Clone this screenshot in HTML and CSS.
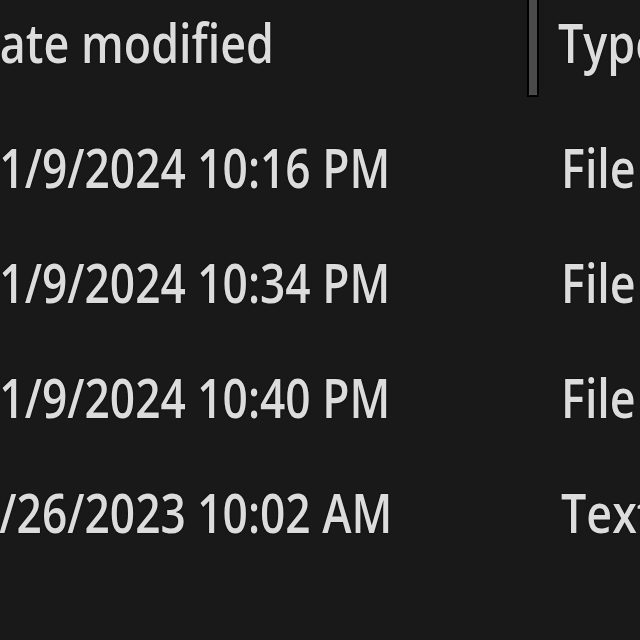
FILE: index.html
```html
<!DOCTYPE html>
<html>
<head>
<meta charset="utf-8">
<link rel="stylesheet" href="styles.css">
</head>
<body>
<div class="view">
  <div class="header">
    <div class="col-date"><span class="head-text">Date modified</span></div>
    <div class="sep"></div>
    <div class="col-type"><span class="head-text">Type</span></div>
  </div>
  <div class="rows">
    <div class="row">
      <div class="col-date"><span class="cell">11/9/2024 10:16 PM</span></div>
      <div class="col-type"><span class="cell">File folder</span></div>
    </div>
    <div class="row">
      <div class="col-date"><span class="cell">11/9/2024 10:34 PM</span></div>
      <div class="col-type"><span class="cell">File folder</span></div>
    </div>
    <div class="row">
      <div class="col-date"><span class="cell">11/9/2024 10:40 PM</span></div>
      <div class="col-type"><span class="cell">File folder</span></div>
    </div>
    <div class="row">
      <div class="col-date"><span class="cell">1/26/2023 10:02 AM</span></div>
      <div class="col-type"><span class="cell">Text Document</span></div>
    </div>
  </div>
</div>
</body>
</html>
```
FILE: styles.css
```css
html, body {
  margin: 0;
  padding: 0;
  background: #191919;
}
.view {
  width: 640px;
  height: 640px;
  overflow: hidden;
  font-family: "Open Sans", "Noto Sans", sans-serif;
  font-size: 54px;
  font-weight: 600;
  color: #dcdcdc;
  text-shadow: 0 0 2px #000;
}
.header {
  display: flex;
  height: 96px;
  align-items: flex-start;
}
.header .col-date {
  width: 562px;
  margin-left: -33px;
  flex: none;
  white-space: nowrap;
  padding-top: 5px;
}
.sep {
  width: 8px;
  height: 95px;
  flex: none;
  background: #4a4a4a;
  box-shadow: 0 0 0 2px #000;
}
.header .col-type {
  padding-left: 21px;
  padding-top: 5px;
  white-space: nowrap;
}
.rows {
  display: flex;
  flex-direction: column;
  padding-top: 34px;
}
.row {
  display: flex;
  height: 115px;
  white-space: nowrap;
}
.row .col-date {
  width: 587px;
  margin-left: -26px;
  flex: none;
}
.row .col-type {
  white-space: nowrap;
}
.head-text, .cell {
  display: inline-block;
  line-height: 60px;
  transform: scaleX(0.83);
  transform-origin: left center;
}
.row .col-date .cell {
  transform: scaleX(0.82);
}
```
